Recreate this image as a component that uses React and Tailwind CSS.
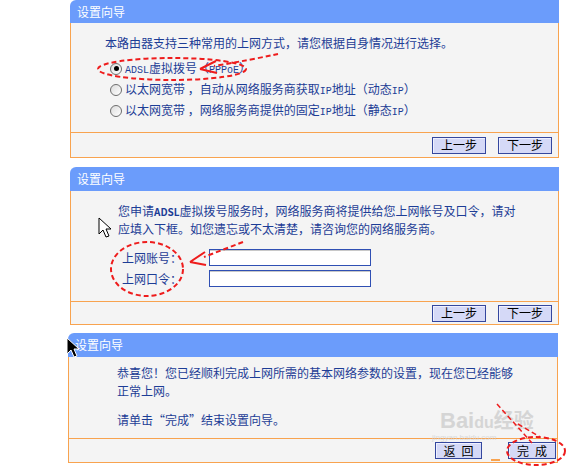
import React from 'react';

const Btn = ({ children, w }) => (
  <button
    className={`h-[17px] ${w} border border-[#34479e] bg-[#d5d9f7] text-[12px] leading-none text-black shadow-[inset_1px_1px_0_#eef0ff]`}
  >
    {children}
  </button>
);

const Panel = ({ wrap, head, body, children, footer, foot }) => (
  <div className={wrap}>
    <div className={`${head} rounded-tl-[6px] bg-[#6b9cfb] pl-[7px] text-[12px] text-white`}>
      设置向导
    </div>
    <div className="border-x border-b border-[#f8a34f] bg-[#f4f4f4]">
      <div className={body}>{children}</div>
      <div className={`${foot} flex items-center justify-end border-t border-[#f8a34f]`}>{footer}</div>
    </div>
  </div>
);

const Radio = ({ on, children }) => (
  <div className="flex h-[21px] items-center gap-[3px]">
    <span className="flex h-[12px] w-[12px] items-center justify-center rounded-full border border-[#6d6d6d] bg-gradient-to-br from-[#dcdcdc] to-white">
      {on && <span className="h-[5px] w-[5px] rounded-full bg-black" />}
    </span>
    <span>{children}</span>
  </div>
);

const Mono = ({ children }) => (
  <span className="font-['Liberation_Mono',monospace] text-[10px]">{children}</span>
);

export default function App() {
  return (
    <div className="relative h-[466px] w-[573px] overflow-hidden bg-white font-['Noto_Sans_CJK_SC',sans-serif] text-[12px] text-[#1d3d96]">
      {/* step 1 */}
      <Panel
        wrap="ml-[70px] w-[489px]"
        head="h-[23px] leading-[24px]"
        body="h-[109px] pl-[34px] pt-[11px]"
        foot="h-[25px] gap-[12px] pr-[6px]"
        footer={
          <>
            <Btn w="w-[54px]">上一步</Btn>
            <Btn w="w-[54px]">下一步</Btn>
          </>
        }
      >
        <p className="leading-[18px]">本路由器支持三种常用的上网方式，请您根据自身情况进行选择。</p>
        <div className="mt-[6px] pl-[5px]">
          <Radio on>
            <Mono>ADSL</Mono>虚拟拨号（<Mono>PPPoE</Mono>）
          </Radio>
          <Radio>
            以太网宽带 ，自动从网络服务商获取<Mono>IP</Mono>地址（动态<Mono>IP</Mono>）
          </Radio>
          <Radio>
            以太网宽带 ，网络服务商提供的固定<Mono>IP</Mono>地址（静态<Mono>IP</Mono>）
          </Radio>
        </div>
      </Panel>

      {/* step 2 */}
      <Panel
        wrap="ml-[70px] mt-[9px] w-[489px]"
        head="h-[24px] leading-[24px]"
        body="h-[110px] pl-[47px] pt-[11px]"
        foot="h-[23px] gap-[12px] pr-[6px]"
        footer={
          <>
            <Btn w="w-[54px]">上一步</Btn>
            <Btn w="w-[54px]">下一步</Btn>
          </>
        }
      >
        <p className="leading-[17px]">
          您申请<span className="text-[10px] font-bold">ADSL</span>虚拟拨号服务时，网络服务商将提供给您上网帐号及口令，请对
          <br />
          应填入下框。如您遗忘或不太清楚，请咨询您的网络服务商。
        </p>
        <div className="mt-[12px] flex flex-col gap-[4px] pl-[4px]">
          <div className="flex h-[17px] items-center">
            <span className="w-[87px]">上网账号：</span>
            <span className="h-[17px] w-[162px] border border-[#2f4fb3] bg-white shadow-[inset_0_1px_0_#c8c8c8]" />
          </div>
          <div className="flex h-[17px] items-center">
            <span className="w-[87px]">上网口令：</span>
            <span className="h-[17px] w-[162px] border border-[#2f4fb3] bg-white shadow-[inset_0_1px_0_#c8c8c8]" />
          </div>
        </div>
      </Panel>

      {/* step 3 */}
      <Panel
        wrap="ml-[68px] mt-[8px] w-[490px]"
        head="h-[24px] leading-[24px]"
        body="h-[81px] pl-[48px] pt-[7px]"
        foot="h-[24px] gap-[26px] pr-[1px]"
        footer={
          <>
            <Btn w="w-[47px] pl-[6px] tracking-[6px]">返回</Btn>
            <Btn w="w-[48px] pl-[6px] tracking-[6px]">完成</Btn>
          </>
        }
      >
        <p className="leading-[18px]">
          恭喜您！您已经顺利完成上网所需的基本网络参数的设置，现在您已经能够
          <br />
          正常上网。
        </p>
        <p className="mt-[11px] leading-[18px]">请单击“完成”结束设置向导。</p>
      </Panel>

      {/* watermark */}
      <div className="pointer-events-none absolute left-[440px] top-[410px] font-['Liberation_Sans',sans-serif] text-[22px] font-bold leading-none text-[#c9c9c9] opacity-70">
        Bai<span className="text-[16px]">du</span>
        <span className="font-['Noto_Sans_CJK_SC',sans-serif] text-[20px]">经验</span>
      </div>
      <div className="pointer-events-none absolute left-[432px] top-[434px] font-['Liberation_Sans',sans-serif] text-[8px] leading-none text-[#cfcfcf] opacity-70">
        jingyan.baidu.com
      </div>

      {/* annotations */}
      <svg className="pointer-events-none absolute left-0 top-0" width="573" height="466" viewBox="0 0 573 466">
        <g fill="none" stroke="#ee1c1c" strokeWidth="2" strokeDasharray="5 3">
          <ellipse cx="172" cy="69" rx="74" ry="11" />
          <path d="M278 54 Q250 60 214 66" />
          <path d="M200 69 L216 61 M200 69 L217 73" strokeDasharray="none" />
          <ellipse cx="147" cy="269" rx="36" ry="27" />
          <path d="M243 242 L204 257" />
          <path d="M190 262 L205 252 M190 262 L206 265" strokeDasharray="none" />
          <ellipse cx="536" cy="451" rx="29" ry="14" />
          <path d="M497 404 L532 443" strokeWidth="1.5" />
          <path d="M518 424 L540 437" strokeWidth="1.5" />
        </g>
        <path d="M491 460 L500 460" stroke="#f8a34f" strokeWidth="2" />
        {/* outline cursor */}
        <path
          d="M99 218 L99 234 L103 230 L106 237 L109 236 L106 229 L111 229 Z"
          fill="#fff"
          stroke="#000"
          strokeWidth="1"
        />
        {/* black cursor */}
        <path
          d="M67 338 L67 354 L71 350 L74 357 L77 356 L74 349 L79 349 Z"
          fill="#000"
          stroke="#fff"
          strokeWidth="1"
        />
      </svg>
    </div>
  );
}
